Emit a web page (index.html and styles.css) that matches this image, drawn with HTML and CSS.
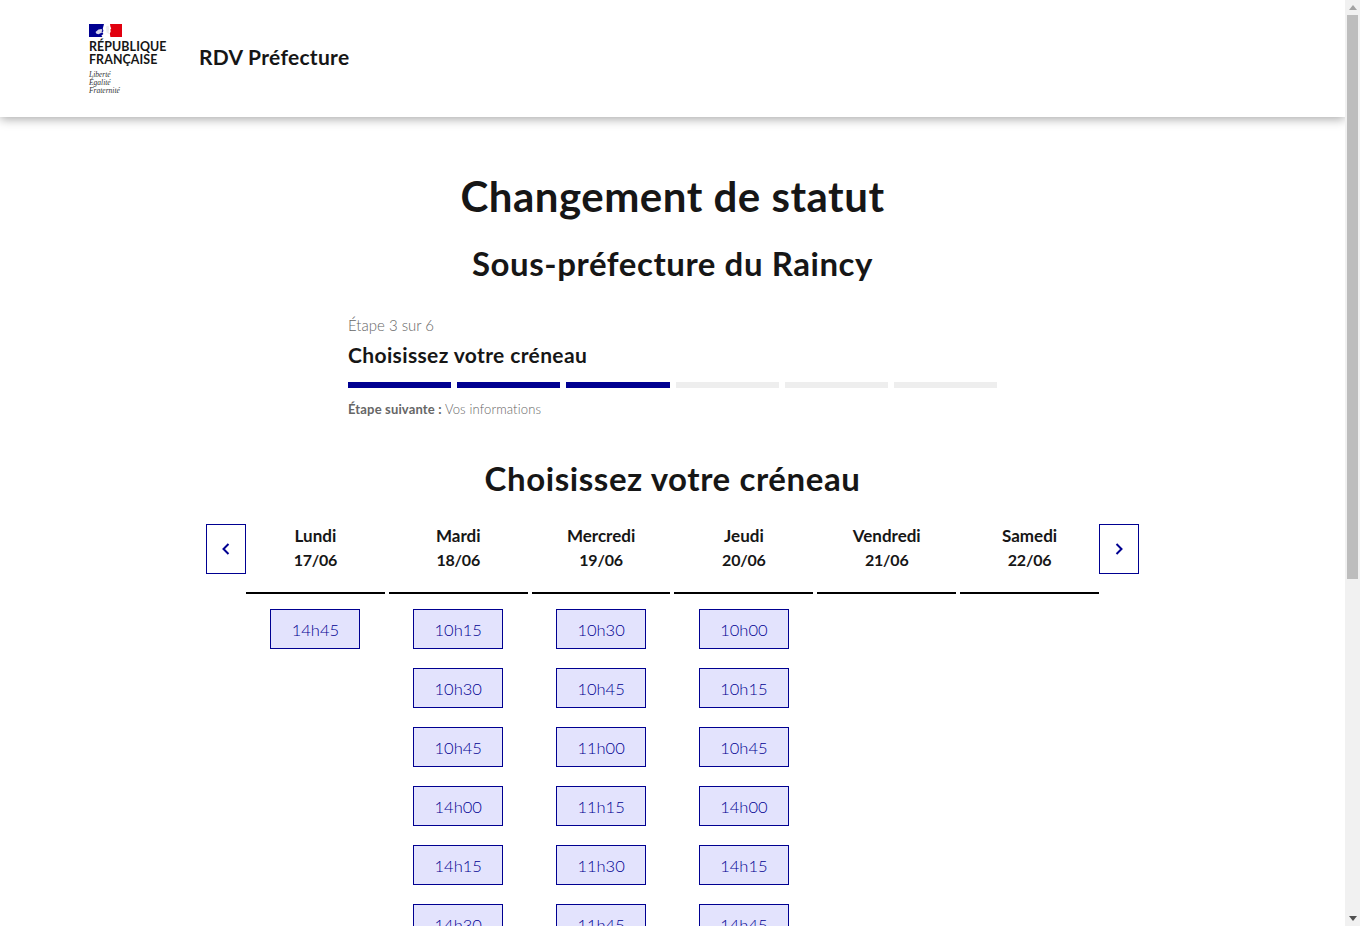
FILE: index.html
```html
<!DOCTYPE html>
<html lang="fr">
<head>
<meta charset="utf-8">
<title>RDV Préfecture</title>
<link rel="stylesheet" href="styles.css">
</head>
<body>
<header class="site-header">
  <div class="brand">
    <svg class="flag" viewBox="0 0 33 13" width="33" height="13" aria-hidden="true">
      <rect width="33" height="13" fill="#e1000f"/>
      <rect width="16" height="13" fill="#000091"/>
      <path d="M15 0 h6 l.4 2.5 .8 2 -.8 1 .3 2 -.9 2 .6 3.500 h-8 l-1-1.500 2-1.500 -1-1.500 1-1.500 -.6-2.500z" fill="#fff"/>
      <path d="M6.500 8 l3-2.500 3-.6 1 1 -1 1.400 1 .9 -2 1 -2 1 -2-.5z" fill="#d6d6ec"/>
      <path d="M17 2.500 l2.500-1 .8 3 -.6 3 .4 2.500 -2.600-1.500z" fill="#ececec"/>
    </svg>
    <div class="republic">RÉPUBLIQUE<br>FRANÇAISE</div>
    <div class="motto">Liberté<br>Égalité<br>Fraternité</div>
  </div>
  <div class="service">RDV Préfecture</div>
</header>
<main class="page">
  <h1 class="title">Changement de statut</h1>
  <h2 class="subtitle">Sous-préfecture du Raincy</h2>
  <section class="stepper">
    <div class="step-state">Étape 3 sur 6</div>
    <div class="step-title">Choisissez votre créneau</div>
    <div class="step-bars">
      <span class="bar bar-on"></span><span class="bar bar-on"></span><span class="bar bar-on"></span><span class="bar"></span><span class="bar"></span><span class="bar"></span>
    </div>
    <div class="step-next"><b>Étape suivante :</b> Vos informations</div>
  </section>
  <h2 class="section-title">Choisissez votre créneau</h2>
  <section class="calendar">
    <button class="nav" aria-label="Précédent"><svg viewBox="0 0 12 14" width="12" height="14"><path d="M8.500 2 L3.500 7 L8.500 12" fill="none" stroke="#000091" stroke-width="2"/></svg></button>
    <div class="days">
      <div class="day">
        <div class="day-head">Lundi<br><span class="date">17/06</span></div>
        <a class="slot">14h45</a>
      </div>
      <div class="day">
        <div class="day-head">Mardi<br><span class="date">18/06</span></div>
        <a class="slot">10h15</a><a class="slot">10h30</a><a class="slot">10h45</a><a class="slot">14h00</a><a class="slot">14h15</a><a class="slot">14h30</a>
      </div>
      <div class="day">
        <div class="day-head">Mercredi<br><span class="date">19/06</span></div>
        <a class="slot">10h30</a><a class="slot">10h45</a><a class="slot">11h00</a><a class="slot">11h15</a><a class="slot">11h30</a><a class="slot">11h45</a>
      </div>
      <div class="day">
        <div class="day-head">Jeudi<br><span class="date">20/06</span></div>
        <a class="slot">10h00</a><a class="slot">10h15</a><a class="slot">10h45</a><a class="slot">14h00</a><a class="slot">14h15</a><a class="slot">14h45</a>
      </div>
      <div class="day">
        <div class="day-head">Vendredi<br><span class="date">21/06</span></div>
      </div>
      <div class="day">
        <div class="day-head">Samedi<br><span class="date">22/06</span></div>
      </div>
    </div>
    <button class="nav" aria-label="Suivant"><svg viewBox="0 0 12 14" width="12" height="14"><path d="M3.500 2 L8.500 7 L3.500 12" fill="none" stroke="#000091" stroke-width="2"/></svg></button>
  </section>
</main>
<div class="scrollbar" aria-hidden="true">
  <span class="arrow arrow-up"></span>
  <span class="thumb"></span>
  <span class="arrow arrow-down"></span>
</div>
</body>
</html>
```
FILE: styles.css
```css
* { box-sizing: border-box; }
html { scrollbar-width: none; }
body {
  margin: 0;
  padding-right: 15px;
  min-height: 1471px;
  background: #fff;
  color: #161616;
  font-family: "Lato", "Liberation Sans", sans-serif;
}
.scrollbar {
  position: fixed;
  top: 0;
  right: 0;
  bottom: 0;
  width: 15px;
  background: #f1f1f1;
}
.thumb {
  position: absolute;
  top: 15px;
  left: 2px;
  width: 11px;
  height: 564px;
  background: #bdbdbd;
}
.arrow {
  position: absolute;
  left: 4px;
  width: 0;
  height: 0;
  border-left: 4px solid transparent;
  border-right: 4px solid transparent;
}
.arrow-up { top: 5px; border-bottom: 5px solid #a3a3a3; }
.arrow-down { bottom: 5px; border-top: 5px solid #505050; }
.site-header {
  height: 117px;
  display: flex;
  align-items: center;
  padding-left: 89px;
  background: #fff;
  box-shadow: 0 2px 10px rgba(0, 0, 0, .35);
}
.brand { width: 110px; padding-top: 1px; }
.flag { display: block; margin-bottom: 3px; }
.republic {
  font-weight: 700;
  font-size: 12.4px;
  line-height: 13px;
  letter-spacing: .1px;
  white-space: nowrap;
}
.motto {
  margin-top: 5px;
  font-family: "Liberation Serif", serif;
  font-style: italic;
  font-size: 7.5px;
  line-height: 8px;
  color: #333;
}
.service { font-size: 21px; font-weight: 700; letter-spacing: .3px; padding-bottom: 4px; }
.page { display: flex; flex-direction: column; align-items: center; }
.title {
  margin: 55px 0 0;
  font-size: 42px;
  line-height: 48px;
  font-weight: 700;
  letter-spacing: .5px;
}
.subtitle {
  margin: 25px 0 0;
  font-size: 33px;
  line-height: 36px;
  font-weight: 700;
  letter-spacing: .56px;
}
.stepper { width: 649px; margin-top: 32px; }
.step-state { font-size: 15px; line-height: 24px; color: #666; font-weight: 300; }
.step-title { margin-top: 4px; font-size: 21px; line-height: 28px; font-weight: 700; letter-spacing: .37px; }
.step-bars { display: flex; gap: 6px; margin-top: 13px; }
.bar { flex: 1; height: 6px; background: #eee; }
.bar-on { background: #000091; }
.step-next { margin-top: 11px; font-size: 13px; line-height: 20px; color: #666; font-weight: 300; letter-spacing: .15px; }
.step-next b { font-weight: 700; }
.section-title {
  margin: 39px 0 0;
  font-size: 33px;
  line-height: 40px;
  font-weight: 700;
  letter-spacing: .58px;
}
.calendar { display: flex; align-items: flex-start; width: 933px; margin-top: 26px; }
.nav {
  flex: none;
  width: 40px;
  height: 50px;
  padding: 0;
  display: flex;
  align-items: center;
  justify-content: center;
  background: #fff;
  border: 1px solid #000091;
}
.days { flex: 1; display: flex; gap: 4px; }
.day { flex: 1; display: flex; flex-direction: column; align-items: center; }
.day-head {
  align-self: stretch;
  height: 70px;
  margin-bottom: 15px;
  border-bottom: 2px solid #000;
  text-align: center;
  font-size: 17px;
  line-height: 24px;
  font-weight: 700;
}
.date { font-size: 16px; letter-spacing: -.2px; }
.slot {
  width: 90px;
  height: 40px;
  margin-bottom: 19px;
  padding-top: 2px;
  display: flex;
  align-items: center;
  justify-content: center;
  background: #e3e3fd;
  border: 1px solid #000091;
  color: #000091;
  font-size: 16.5px;
  font-weight: 300;
}
```
